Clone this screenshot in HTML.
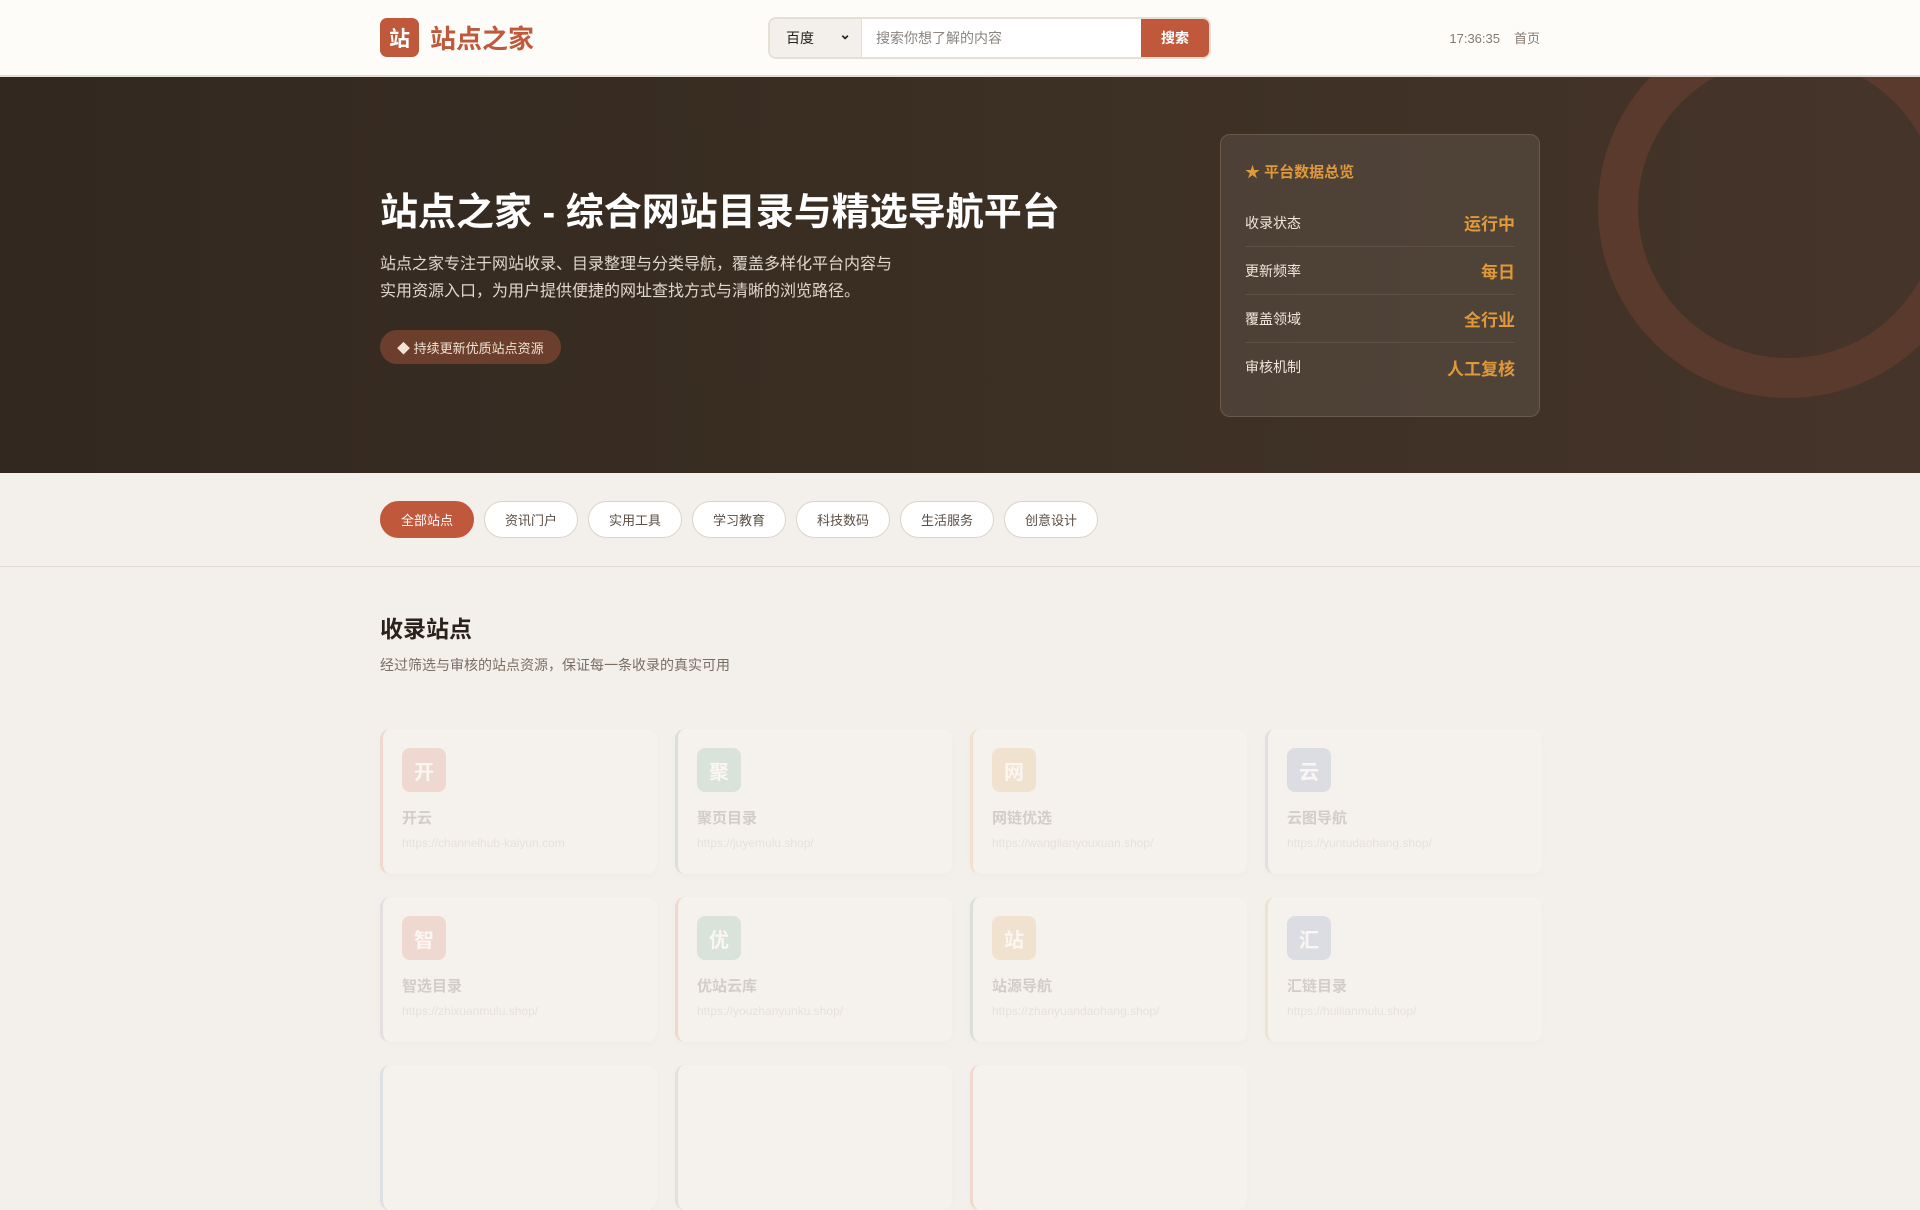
<!DOCTYPE html>
<html><head><meta charset="utf-8"><style>
*{margin:0;padding:0;box-sizing:border-box}
body{width:1920px;height:1080px;overflow:hidden;background:#f3efea;font-family:"Liberation Sans","Noto Sans CJK SC",sans-serif;color:#2a211b}
.wrap{width:1160px;margin:0 auto;position:relative}
header{height:77px;background:#fdfcf9;border-bottom:2px solid #e4dcd0}
.logo{position:absolute;left:0;top:18px;display:flex;align-items:center}
.logo .ic{width:39px;height:39px;border-radius:7px;background:#c0583c;color:#fff;font-weight:bold;font-size:21px;display:flex;align-items:center;justify-content:center}
.logo .t{margin-left:11px;font-size:26px;font-weight:bold;color:#c0583c}
.search{position:absolute;left:388px;top:17px;width:443px;height:42px;border:2px solid #e6dfd4;border-radius:8px;display:flex;overflow:hidden;background:#fff}
.search .sel{width:92px;background:#f3f0eb;border-right:1px solid #e6dfd4;font-size:14px;display:flex;align-items:center;padding-left:16px;color:#222;position:relative}
.search .sel:after{content:"⌄";position:absolute;right:10px;top:7px;font-size:14px;font-weight:bold}
.search .in{flex:1;font-size:14px;color:#8a8580;padding-left:14px;display:flex;align-items:center}
.search .bt{width:68px;background:#c0583c;color:#fff;font-weight:bold;font-size:14px;display:flex;align-items:center;justify-content:center}
.hr{position:absolute;right:0;top:28px;font-size:13px;color:#857a70}
.hr span{margin-left:14px}
.hero{height:396px;background:linear-gradient(90deg,#322820,#3d3024 60%,#45342a);position:relative;overflow:hidden}
.ring{position:absolute;left:1598px;top:-59px;width:380px;height:380px;border-radius:50%;border:40px solid #5a3a2d}
.hero h1{position:absolute;left:0;top:104px;font-size:38px;color:#fff;font-weight:bold;letter-spacing:0}
.hero p{position:absolute;left:0;top:174px;font-size:16px;line-height:27px;color:#e0d6cc;width:522px}
.badge{position:absolute;left:0;top:253px;height:34px;padding:0 17px;border-radius:17px;background:#6b3f2c;color:#f0e2d6;font-size:13px;display:flex;align-items:center}
.card{position:absolute;left:840px;top:57px;width:320px;height:283px;border:1px solid #6a5a4c;border-radius:10px;background:rgba(255,255,255,.08);padding:0 24px}
.card h3{color:#e0993a;font-size:15px;margin-top:26px;margin-bottom:17px}
.row{height:48px;display:flex;justify-content:space-between;align-items:center;border-bottom:1px solid #5e5144;font-size:14px;color:#efe6dc}
.row:last-child{border:none}
.row b{color:#e0993a;font-size:17px}
.filt{height:94px;border-bottom:1px solid #e2dbd1;background:#f3efea}
.pills{position:absolute;top:28px;left:0;display:flex}
.pill{width:94px;height:37px;border:1px solid #ddd4c9;border-radius:19px;background:#fff;margin-right:10px;font-size:13px;color:#5a4e44;display:flex;align-items:center;justify-content:center}
.pill.a{background:#c0583c;color:#fff;border-color:#c0583c}
.sec h2{position:absolute;top:43px;font-size:23px;font-weight:bold;color:#2a211b}
.sec .sub{position:absolute;top:88px;font-size:14px;color:#7a6e64}
.grid{position:absolute;top:162px;left:0;width:1160px}
.c{position:absolute;width:277px;height:145px;border-radius:10px;background:#f5f2ee;border-left:3px solid;box-shadow:0 2px 8px rgba(0,0,0,.02)}
.c .i{position:absolute;left:19px;top:19px;width:44px;height:44px;border-radius:8px;color:#fbf6f2;font-weight:bold;font-size:20px;display:flex;align-items:center;justify-content:center}
.c .n{position:absolute;left:19px;top:78px;font-size:15px;font-weight:bold;color:#d3cdc6}
.c .u{position:absolute;left:19px;top:107px;font-size:12px;color:#e6e0d9}
</style></head><body>
<header><div class="wrap">
<div class="logo"><div class="ic">站</div><div class="t">站点之家</div></div>
<div class="search"><div class="sel">百度</div><div class="in">搜索你想了解的内容</div><div class="bt">搜索</div></div>
<div class="hr">17:36:35<span>首页</span></div>
</div></header>
<div class="hero"><div class="ring"></div><div class="wrap">
<h1>站点之家 - 综合网站目录与精选导航平台</h1>
<p>站点之家专注于网站收录、目录整理与分类导航，覆盖多样化平台内容与实用资源入口，为用户提供便捷的网址查找方式与清晰的浏览路径。</p>
<div class="badge">◆ 持续更新优质站点资源</div>
<div class="card"><h3>★ 平台数据总览</h3>
<div class="row">收录状态<b>运行中</b></div>
<div class="row">更新频率<b>每日</b></div>
<div class="row">覆盖领域<b>全行业</b></div>
<div class="row">审核机制<b>人工复核</b></div>
</div></div></div>
<div class="filt"><div class="wrap"><div class="pills">
<div class="pill a">全部站点</div><div class="pill">资讯门户</div><div class="pill">实用工具</div><div class="pill">学习教育</div><div class="pill">科技数码</div><div class="pill">生活服务</div><div class="pill">创意设计</div>
</div></div></div>
<div class="wrap sec">
<h2>收录站点</h2><div class="sub">经过筛选与审核的站点资源，保证每一条收录的真实可用</div>
<div class="grid">
<div class="c" style="left:0;top:0;border-color:#f0d8cc"><div class="i" style="background:#efd8cf">开</div><div class="n">开云</div><div class="u">https://channelhub-kaiyun.com</div></div>
<div class="c" style="left:295px;top:0;border-color:#d8e0d8"><div class="i" style="background:#d9e3db">聚</div><div class="n">聚页目录</div><div class="u">https://juyemulu.shop/</div></div>
<div class="c" style="left:590px;top:0;border-color:#f0e2cf"><div class="i" style="background:#f1e2cf">网</div><div class="n">网链优选</div><div class="u">https://wanglianyouxuan.shop/</div></div>
<div class="c" style="left:885px;top:0;border-color:#dfe0e4"><div class="i" style="background:#dcdde2">云</div><div class="n">云图导航</div><div class="u">https://yuntudaohang.shop/</div></div>
<div class="c" style="left:0;top:168px;border-color:#e6dfe2"><div class="i" style="background:#efd8cf">智</div><div class="n">智选目录</div><div class="u">https://zhixuanmulu.shop/</div></div>
<div class="c" style="left:295px;top:168px;border-color:#f0d8cc"><div class="i" style="background:#d9e3db">优</div><div class="n">优站云库</div><div class="u">https://youzhanyunku.shop/</div></div>
<div class="c" style="left:590px;top:168px;border-color:#d8e0d8"><div class="i" style="background:#f1e2cf">站</div><div class="n">站源导航</div><div class="u">https://zhanyuandaohang.shop/</div></div>
<div class="c" style="left:885px;top:168px;border-color:#f0e2cf"><div class="i" style="background:#dcdde2">汇</div><div class="n">汇链目录</div><div class="u">https://huilianmulu.shop/</div></div>
<div class="c" style="left:0;top:336px;border-color:#dfe0e4"></div>
<div class="c" style="left:295px;top:336px;border-color:#e6dfe2"></div>
<div class="c" style="left:590px;top:336px;border-color:#f0d8cc"></div>
</div></div>
</body></html>
